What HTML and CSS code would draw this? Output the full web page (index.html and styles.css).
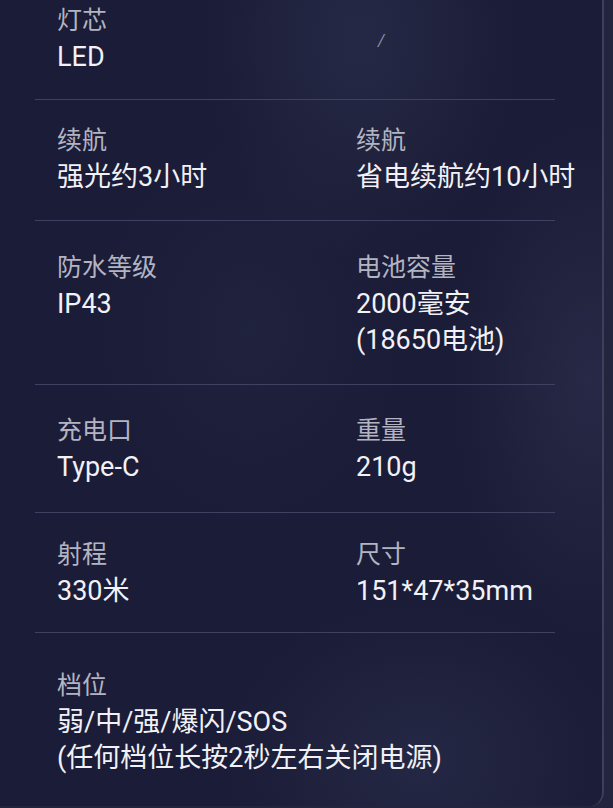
FILE: index.html
```html
<!DOCTYPE html>
<html lang="zh-CN">
<head>
<meta charset="utf-8">
<title>规格参数</title>
<link rel="stylesheet" href="styles.css">
</head>
<body>
<div class="card">
  <div class="row row--first">
    <div class="cell">
      <div class="label">灯芯</div>
      <div class="value">LED</div>
    </div>
    <div class="cell"><span class="stray">/</span></div>
  </div>
  <div class="row row--b">
    <div class="cell">
      <div class="label">续航</div>
      <div class="value">强光约3小时</div>
    </div>
    <div class="cell">
      <div class="label">续航</div>
      <div class="value">省电续航约10小时</div>
    </div>
  </div>
  <div class="row row--c">
    <div class="cell">
      <div class="label">防水等级</div>
      <div class="value">IP43</div>
    </div>
    <div class="cell">
      <div class="label">电池容量</div>
      <div class="value">2000毫安<br>(18650电池)</div>
    </div>
  </div>
  <div class="row row--d">
    <div class="cell">
      <div class="label">充电口</div>
      <div class="value">Type-C</div>
    </div>
    <div class="cell">
      <div class="label">重量</div>
      <div class="value">210g</div>
    </div>
  </div>
  <div class="row row--e">
    <div class="cell">
      <div class="label">射程</div>
      <div class="value">330米</div>
    </div>
    <div class="cell">
      <div class="label">尺寸</div>
      <div class="value">151*47*35mm</div>
    </div>
  </div>
  <div class="row row--last">
    <div class="cell cell--wide">
      <div class="label">档位</div>
      <div class="value">弱/中/强/爆闪/SOS<br>(任何档位长按2秒左右关闭电源)</div>
    </div>
  </div>
</div>
</body>
</html>
```

FILE: styles.css
```css
html, body {
  margin: 0;
  padding: 0;
}
body {
  width: 613px;
  height: 808px;
  overflow: hidden;
  background: #23253f;
  font-family: Roboto, "Noto Sans CJK SC", "Noto Sans", sans-serif;
}
.card {
  width: 604px;
  height: 806px;
  box-sizing: border-box;
  border-right: 2px solid #3c3f5e;
  border-bottom-right-radius: 14px;
  overflow: hidden;
  background:
    radial-gradient(ellipse 160px 220px at 360px 40px, rgba(48, 54, 84, 0.5), rgba(48, 54, 84, 0) 100%),
    radial-gradient(ellipse 200px 160px at 420px 760px, rgba(48, 54, 84, 0.45), rgba(48, 54, 84, 0) 100%),
    radial-gradient(ellipse 140px 260px at 590px 380px, rgba(56, 60, 92, 0.4), rgba(56, 60, 92, 0) 100%),
    radial-gradient(ellipse 160px 200px at 250px 330px, rgba(38, 42, 70, 0.45), rgba(38, 42, 70, 0) 100%),
    #1b1c37;
}
.row {
  display: grid;
  grid-template-columns: 299px 1fr;
  margin-left: 35px;
  width: 520px;
  padding-left: 22px;
  box-sizing: border-box;
  border-bottom: 1px solid #3e4262;
}
.row--first { padding-top: 3px; padding-bottom: 24px; }
.row--b { padding-top: 23px; padding-bottom: 25px; }
.row--c { padding-top: 29px; padding-bottom: 26px; }
.row--d { padding-top: 28px; padding-bottom: 27px; }
.row--e { padding-top: 24px; padding-bottom: 23px; }
.row--last { padding-top: 35px; border-bottom: none; }
.cell--wide { grid-column: 1 / -1; white-space: nowrap; }
.label {
  font-size: 25px;
  line-height: 36px;
  color: #b2b4c1;
}
.value {
  font-size: 27px;
  line-height: 36px;
  color: #f1f1f6;
  white-space: nowrap;
}
.stray {
  display: block;
  margin: 28px 0 0 22px;
  font-size: 16px;
  line-height: 20px;
  color: #8d90a6;
  font-style: italic;
}
```
